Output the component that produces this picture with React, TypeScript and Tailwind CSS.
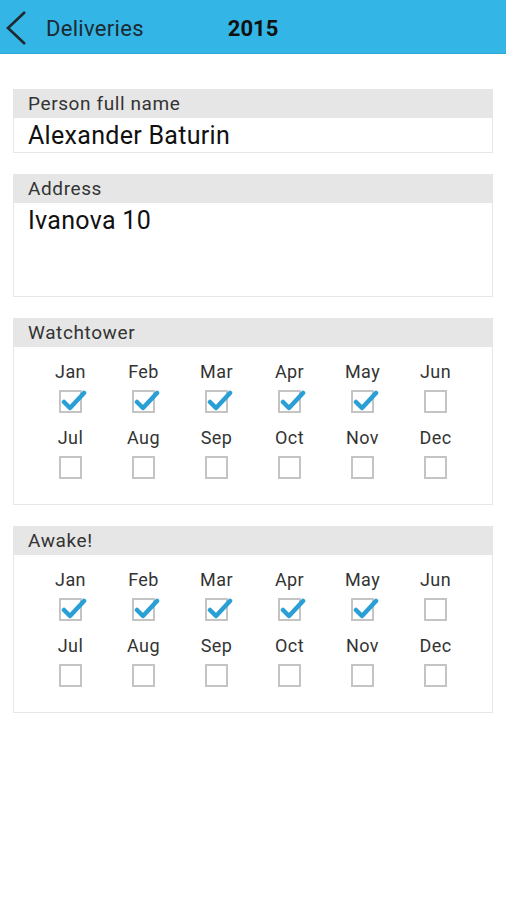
const months = ["Jan", "Feb", "Mar", "Apr", "May", "Jun", "Jul", "Aug", "Sep", "Oct", "Nov", "Dec"];

const Check = ({ checked }: { checked: boolean }) => (
  <div className="relative w-[23px] h-[23px] border-2 border-[#c4c4c4] bg-white">
    {checked && (
      <svg
        className="absolute -left-[1px] -top-[3px]"
        width="27"
        height="24"
        viewBox="0 0 27 24"
      >
        <path
          d="M4 13 L10 19 L24 4"
          fill="none"
          stroke="#2a9fd6"
          strokeWidth="4.5"
          strokeLinecap="round"
          strokeLinejoin="round"
        />
      </svg>
    )}
  </div>
);

const Card = ({ title, children }: { title: string; children: React.ReactNode }) => (
  <div className="mx-[13px] border border-[#e6e6e6] bg-white">
    <div className="h-[28px] bg-[#e6e6e6] pl-[14px] flex items-center text-[19px] tracking-[0.6px] text-[#333]">
      {title}
    </div>
    {children}
  </div>
);

const MonthGrid = ({ done }: { done: number }) => (
  <div className="grid grid-cols-6 gap-y-[14px] px-[20px] pt-[14px] pb-[25px]">
    {months.map((m, i) => (
      <div key={m} className="flex flex-col items-center gap-[7px]">
        <div className="h-[22px] leading-[22px] text-[18px] tracking-[0.4px] text-[#333]">{m}</div>
        <Check checked={i < done} />
      </div>
    ))}
  </div>
);

export default function App() {
  return (
    <div
      className="w-[506px] h-[900px] bg-white"
      style={{ fontFamily: "Roboto, 'Liberation Sans', sans-serif" }}
    >
      <div className="h-[54px] bg-[#33b5e5] border-b border-[#2ca6d4] flex items-center">
        <svg className="ml-[4px] mt-[2px]" width="26" height="38" viewBox="0 0 26 38">
          <path d="M21 3 L4 19 L21 35" fill="none" stroke="#1f2a30" strokeWidth="2.6" />
        </svg>
        <div className="ml-[16px] mt-[4px] text-[22px] tracking-[0.3px] text-[#1c2b33]">Deliveries</div>
        <div className="ml-[84px] mt-[4px] text-[22px] font-bold text-[#111]">2015</div>
      </div>
      <div className="pt-[35px] flex flex-col gap-[21px]">
        <Card title="Person full name">
          <div className="h-[34px] pl-[14px] text-[25px] tracking-[0.3px] leading-[36px] text-[#111]">
            Alexander Baturin
          </div>
        </Card>
        <Card title="Address">
          <div className="h-[93px] pl-[14px] pt-[2px] text-[25px] tracking-[0.3px] leading-[32px] text-[#111]">
            Ivanova 10
          </div>
        </Card>
        <Card title="Watchtower">
          <MonthGrid done={5} />
        </Card>
        <Card title="Awake!">
          <MonthGrid done={5} />
        </Card>
      </div>
    </div>
  );
}
